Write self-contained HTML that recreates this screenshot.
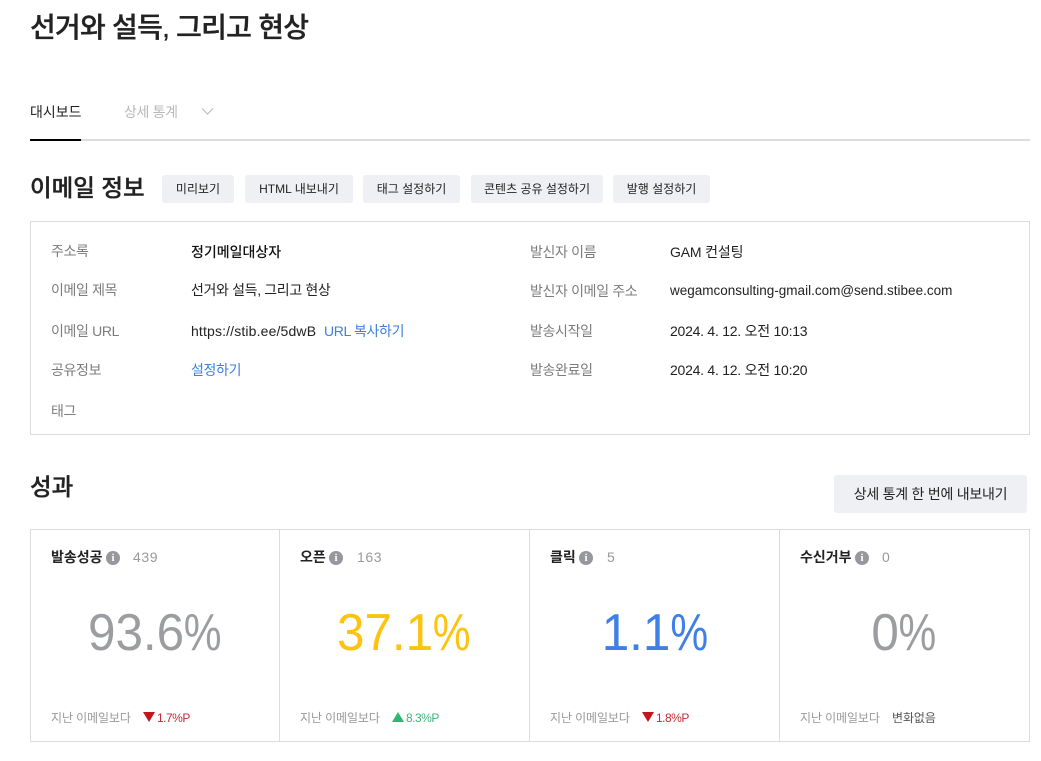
<!DOCTYPE html>
<html lang="ko"><head><meta charset="utf-8"><style>
html,body{margin:0;padding:0;background:#fff}
body{width:1041px;height:761px;position:relative;overflow:hidden;font-family:"Liberation Sans","Noto Sans CJK KR",sans-serif;color:#222}
.a{position:absolute;white-space:nowrap}
.t{position:absolute;white-space:nowrap;font-size:14px;line-height:20px;color:#222;letter-spacing:-.35px}
.l{color:#7c7c7c}
.b{color:#3f7fe0}
.btn{position:absolute;top:175px;height:28px;background:#eef0f3;border-radius:3px;font-size:12px;line-height:28px;text-align:center;color:#222;white-space:nowrap}
.box{position:absolute;border:1px solid #dcdcdc;box-sizing:border-box}
.v{position:absolute;top:530px;width:1px;height:211px;background:#dcdcdc}
.h{position:absolute;top:547px;font-size:14px;line-height:20px;font-weight:700;color:#222;white-space:nowrap}
.n{position:absolute;top:547px;font-size:14px;line-height:20px;color:#999;white-space:nowrap;letter-spacing:.6px}
.i{position:absolute;top:551px;width:14px;height:14px;border-radius:50%;background:#96989e;color:#fff;font:bold 11px/14px "Liberation Serif",serif;text-align:center}
.big{position:absolute;top:601px;width:250px;text-align:center;font-size:52px;line-height:64px;white-space:nowrap;transform:scaleX(.95)}
.big span{display:inline-block;margin:0 -3.2px;transform:scaleX(.86)}
.f{position:absolute;top:709px;font-size:12px;line-height:18px;color:#999;white-space:nowrap;letter-spacing:-.1px}
.d{position:absolute;top:709px;font-size:12px;line-height:18px;white-space:nowrap;letter-spacing:-.5px}
.tri{position:absolute;top:712px}
.hd{font-weight:500;-webkit-text-stroke:.35px #222}
</style></head><body>
<div class="a hd" style="left:30px;top:8px;font-size:28px;line-height:40px;color:#222;letter-spacing:-.75px">선거와 설득, 그리고 현상</div>
<div class="t" style="left:30px;top:102px;color:#222;letter-spacing:0">대시보드</div>
<div class="t" style="left:124px;top:102px;color:#b8b8b8">상세 통계</div>
<svg class="a" style="left:201px;top:107px" width="13" height="9" viewBox="0 0 13 9"><path d="M1 1.5L6.5 7L12 1.5" fill="none" stroke="#bdbdbd" stroke-width="1.2"/></svg>
<div class="a" style="left:30px;top:139px;width:1000px;height:2px;background:#dcdcdc"></div>
<div class="a" style="left:30px;top:139px;width:51px;height:2px;background:#000"></div>
<div class="a hd" style="left:30px;top:171px;font-size:23.5px;line-height:34px;color:#222">이메일 정보</div>
<div class="btn" style="left:162px;width:72px">미리보기</div>
<div class="btn" style="left:245px;width:108px">HTML 내보내기</div>
<div class="btn" style="left:363px;width:97px">태그 설정하기</div>
<div class="btn" style="left:471px;width:132px">콘텐츠 공유 설정하기</div>
<div class="btn" style="left:613px;width:97px">발행 설정하기</div>
<div class="box" style="left:30px;top:221px;width:1000px;height:214px"></div>
<div class="t l" style="left:51px;top:241px">주소록</div>
<div class="t" style="left:191px;top:242px;color:#111;font-weight:500;letter-spacing:0">정기메일대상자</div>
<div class="t l" style="left:51px;top:280px">이메일 제목</div>
<div class="t" style="left:191px;top:280px">선거와 설득, 그리고 현상</div>
<div class="t l" style="left:51px;top:321px">이메일 URL</div>
<div class="t" style="left:191px;top:321px;letter-spacing:.15px">https://stib.ee/5dwB</div>
<div class="t b" style="left:324px;top:321px">URL 복사하기</div>
<div class="t l" style="left:51px;top:360px">공유정보</div>
<div class="t b" style="left:191px;top:360px">설정하기</div>
<div class="t l" style="left:51px;top:401px">태그</div>
<div class="t l" style="left:530px;top:242px">발신자 이름</div>
<div class="t" style="left:670px;top:242px;letter-spacing:-.15px">GAM 컨설팅</div>
<div class="t l" style="left:530px;top:281px">발신자 이메일 주소</div>
<div class="t" style="left:670px;top:281px;font-size:13.5px;letter-spacing:0">wegamconsulting-gmail.com@send.stibee.com</div>
<div class="t l" style="left:530px;top:321px">발송시작일</div>
<div class="t" style="left:670px;top:321px;letter-spacing:-.25px">2024. 4. 12. 오전 10:13</div>
<div class="t l" style="left:530px;top:360px">발송완료일</div>
<div class="t" style="left:670px;top:360px;letter-spacing:-.25px">2024. 4. 12. 오전 10:20</div>
<div class="a hd" style="left:30px;top:470px;font-size:23.5px;line-height:34px;color:#222">성과</div>
<div class="btn" style="left:834px;top:475px;width:193px;height:38px;line-height:38px;font-size:14px;letter-spacing:-.25px">상세 통계 한 번에 내보내기</div>
<div class="box" style="left:30px;top:529px;width:1000px;height:213px"></div>
<div class="v" style="left:279px"></div><div class="v" style="left:529px"></div><div class="v" style="left:779px"></div>

<div class="h" style="left:51px">발송성공</div><div class="i" style="left:106px">i</div><div class="n" style="left:133px">439</div>
<div class="big" style="left:30px;color:#9b9da1">93.6<span>%</span></div>
<div class="f" style="left:51px">지난 이메일보다</div>
<svg class="tri" style="left:143px" width="12" height="10"><path d="M0 0H12L6 10Z" fill="#c4161c"/></svg>
<div class="d" style="left:157px;color:#c62a35">1.7%P</div>

<div class="h" style="left:300px">오픈</div><div class="i" style="left:329px">i</div><div class="n" style="left:357px">163</div>
<div class="big" style="left:279px;color:#fdc30f">37.1<span>%</span></div>
<div class="f" style="left:300px">지난 이메일보다</div>
<svg class="tri" style="left:392px" width="12" height="10"><path d="M0 10H12L6 0Z" fill="#2eb673"/></svg>
<div class="d" style="left:406px;color:#3cb57c">8.3%P</div>

<div class="h" style="left:550px">클릭</div><div class="i" style="left:579px">i</div><div class="n" style="left:607px">5</div>
<div class="big" style="left:530px;color:#3f7fe8">1.1<span>%</span></div>
<div class="f" style="left:550px">지난 이메일보다</div>
<svg class="tri" style="left:642px" width="12" height="10"><path d="M0 0H12L6 10Z" fill="#c4161c"/></svg>
<div class="d" style="left:656px;color:#c62a35">1.8%P</div>

<div class="h" style="left:800px">수신거부</div><div class="i" style="left:855px">i</div><div class="n" style="left:882px">0</div>
<div class="big" style="left:779px;color:#9b9da1">0<span>%</span></div>
<div class="f" style="left:800px">지난 이메일보다</div>
<div class="d" style="left:892px;color:#555;letter-spacing:-.1px">변화없음</div>
</body></html>
